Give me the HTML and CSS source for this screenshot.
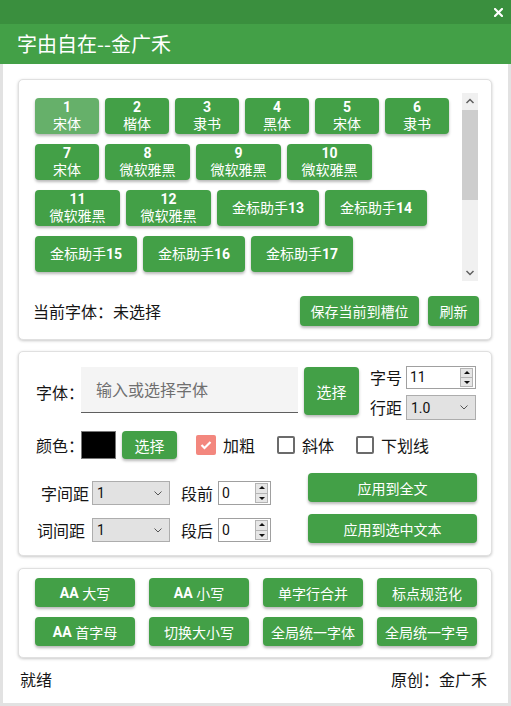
FILE: index.html
```html
<!DOCTYPE html>
<html lang="zh-CN">
<head>
<meta charset="utf-8">
<title>字由自在--金广禾</title>
<link rel="stylesheet" href="styles.css">
</head>
<body>
<div class="app">
  <div class="topbar">
    <svg class="close" width="9" height="9" viewBox="0 0 9 9"><path d="M1 1L8 8M8 1L1 8" stroke="#fff" stroke-width="2.2" stroke-linecap="square" fill="none"/></svg>
  </div>
  <div class="titlebar">字由自在--金广禾</div>
  <div class="main">
    <section class="card card-slots">
      <div class="slots">
        <div class="slot-list">
          <div class="slot-row">
            <button class="btn slot w64 active"><b>1</b><span>宋体</span></button>
            <button class="btn slot w64"><b>2</b><span>楷体</span></button>
            <button class="btn slot w64"><b>3</b><span>隶书</span></button>
            <button class="btn slot w64"><b>4</b><span>黑体</span></button>
            <button class="btn slot w64"><b>5</b><span>宋体</span></button>
            <button class="btn slot w64"><b>6</b><span>隶书</span></button>
          </div>
          <div class="slot-row">
            <button class="btn slot w64"><b>7</b><span>宋体</span></button>
            <button class="btn slot w85"><b>8</b><span>微软雅黑</span></button>
            <button class="btn slot w85"><b>9</b><span>微软雅黑</span></button>
            <button class="btn slot w85"><b>10</b><span>微软雅黑</span></button>
          </div>
          <div class="slot-row">
            <button class="btn slot w85"><b>11</b><span>微软雅黑</span></button>
            <button class="btn slot w85"><b>12</b><span>微软雅黑</span></button>
            <button class="btn slot w102">金标助手<b>13</b></button>
            <button class="btn slot w102">金标助手<b>14</b></button>
          </div>
          <div class="slot-row">
            <button class="btn slot w102">金标助手<b>15</b></button>
            <button class="btn slot w102">金标助手<b>16</b></button>
            <button class="btn slot w102">金标助手<b>17</b></button>
          </div>
        </div>
        <div class="scrollbar">
          <div class="sb-arrow"><svg width="16" height="17" viewBox="0 0 16 17"><polyline points="4.5,10 8,6.5 11.5,10" fill="none" stroke="#606060" stroke-width="1.5"/></svg></div>
          <div class="sb-track"><div class="sb-thumb"></div></div>
          <div class="sb-arrow"><svg width="16" height="17" viewBox="0 0 16 17"><polyline points="4.5,7 8,10.5 11.5,7" fill="none" stroke="#606060" stroke-width="1.5"/></svg></div>
        </div>
      </div>
      <div class="cur-row">
        <span class="cur-label">当前字体：未选择</span>
        <div class="cur-actions">
          <button class="btn btn-sm save">保存当前到槽位</button>
          <button class="btn btn-sm refresh">刷新</button>
        </div>
      </div>
    </section>

    <section class="card card-format">
      <div class="row1">
        <span class="lbl lbl-font">字体：</span>
        <div class="font-input">输入或选择字体</div>
        <button class="btn pick-font">选择</button>
        <div class="size-col">
          <div class="size-row">
            <span class="lbl lbl-size">字号</span>
            <div class="spin spin-size">
              <span class="spin-val">11</span>
              <span class="spin-btns"><span class="sp-up"></span><span class="sp-down"></span></span>
            </div>
          </div>
          <div class="size-row">
            <span class="lbl lbl-size">行距</span>
            <div class="combo combo-line">
              <span>1.0</span>
              <svg width="8" height="5" viewBox="0 0 8 5"><polyline points="0.5,0.5 4,4 7.5,0.5" fill="none" stroke="#555" stroke-width="1"/></svg>
            </div>
          </div>
        </div>
      </div>

      <div class="row2">
        <span class="lbl lbl-color">颜色：</span>
        <span class="swatch"></span>
        <button class="btn pick-color">选择</button>
        <label class="check first">
          <span class="box checked"><svg width="20" height="20" viewBox="0 0 20 20"><polyline points="5.5,10 8.5,13 14.5,7" fill="none" stroke="#fff" stroke-width="2.2"/></svg></span>
          <span class="lbl">加粗</span>
        </label>
        <label class="check">
          <span class="box"></span>
          <span class="lbl">斜体</span>
        </label>
        <label class="check">
          <span class="box"></span>
          <span class="lbl">下划线</span>
        </label>
      </div>

      <div class="row34">
        <div class="spacing">
          <div class="sp-row">
            <span class="lbl sp-label"><span class="in5">字间距</span></span>
            <div class="combo combo-sp">
              <span>1</span>
              <svg width="8" height="5" viewBox="0 0 8 5"><polyline points="0.5,0.5 4,4 7.5,0.5" fill="none" stroke="#555" stroke-width="1"/></svg>
            </div>
            <span class="lbl sp-label2">段前</span>
            <div class="spin spin-para">
              <span class="spin-val">0</span>
              <span class="spin-btns"><span class="sp-up"></span><span class="sp-down"></span></span>
            </div>
          </div>
          <div class="sp-row">
            <span class="lbl sp-label"><span class="in1">词间距</span></span>
            <div class="combo combo-sp">
              <span>1</span>
              <svg width="8" height="5" viewBox="0 0 8 5"><polyline points="0.5,0.5 4,4 7.5,0.5" fill="none" stroke="#555" stroke-width="1"/></svg>
            </div>
            <span class="lbl sp-label2">段后</span>
            <div class="spin spin-para">
              <span class="spin-val">0</span>
              <span class="spin-btns"><span class="sp-up"></span><span class="sp-down"></span></span>
            </div>
          </div>
        </div>
        <div class="apply">
          <button class="btn apply-btn">应用到全文</button>
          <button class="btn apply-btn">应用到选中文本</button>
        </div>
      </div>
    </section>

    <section class="card card-tools">
      <button class="btn tool"><b>AA</b>&nbsp;大写</button>
      <button class="btn tool"><b>AA</b>&nbsp;小写</button>
      <button class="btn tool">单字行合并</button>
      <button class="btn tool">标点规范化</button>
      <button class="btn tool"><b>AA</b>&nbsp;首字母</button>
      <button class="btn tool">切换大小写</button>
      <button class="btn tool">全局统一字体</button>
      <button class="btn tool">全局统一字号</button>
    </section>

    <footer class="status">
      <span>就绪</span>
      <span>原创：金广禾</span>
    </footer>
  </div>
</div>
</body>
</html>
```

FILE: styles.css
```css
* { box-sizing: border-box; }
html, body { margin: 0; padding: 0; }
body {
  width: 511px;
  height: 706px;
  overflow: hidden;
  background: #fff;
  color: #151515;
  font-family: Roboto, "Noto Sans CJK SC", sans-serif;
}
.app {
  width: 511px;
  height: 706px;
  display: flex;
  flex-direction: column;
}
.topbar {
  height: 24px;
  background: #3a8f3e;
  display: flex;
  align-items: center;
  justify-content: flex-end;
  padding-right: 8px;
}
.close { display: block; }
.titlebar {
  height: 40px;
  background: #43a047;
  color: #fff;
  font-family: "Noto Sans CJK SC", sans-serif;
  font-size: 20px;
  line-height: 40px;
  padding-left: 17px;
}
.main {
  flex: 1;
  display: flex;
  flex-direction: column;
  border: 3px solid #e2e2e2;
  border-top: 0;
  padding: 15px 16px 0 15px;
}
.card {
  background: #fff;
  border: 1px solid #e0e0e0;
  border-radius: 5px;
  box-shadow: 0 1px 3px rgba(0, 0, 0, 0.22);
}
.btn {
  border: 0;
  padding: 0;
  margin: 0;
  background: #43a047;
  color: #fff;
  font-family: Roboto, "Noto Sans CJK SC", sans-serif;
  font-size: 14px;
  border-radius: 4px;
  box-shadow: 0 2px 3px rgba(0, 0, 0, 0.28);
  display: flex;
  align-items: center;
  justify-content: center;
  white-space: nowrap;
}
.btn b { font-weight: 700; }
.lbl {
  font-family: "Noto Sans CJK SC", sans-serif;
  font-size: 16px;
  color: #151515;
  white-space: nowrap;
  flex-shrink: 0;
}

/* slots card */
.card-slots { padding: 13px; }
.slots { display: flex; height: 188px; }
.slot-list {
  flex: 1;
  padding: 5px 0 0 3px;
  display: flex;
  flex-direction: column;
  gap: 10px;
  overflow: hidden;
}
.slot-row { display: flex; gap: 6px; }
.slot {
  height: 36px;
  line-height: 17px;
}
.slot b + span { display: block; }
.slot:has(span) { flex-direction: column; }
.w64 { width: 64px; }
.w85 { width: 85px; }
.w102 { width: 102px; }
.active { background: #66b06a; }
.scrollbar {
  width: 16px;
  background: #f0f0f0;
  display: flex;
  flex-direction: column;
}
.sb-arrow { height: 17px; }
.sb-arrow svg { display: block; }
.sb-track { flex: 1; }
.sb-thumb { height: 90px; background: #cdcdcd; }
.cur-row {
  margin-top: 15px;
  height: 30px;
  margin-right: -1px;
  padding-left: 1px;
  display: flex;
  align-items: center;
  justify-content: space-between;
}
.cur-label {
  font-family: "Noto Sans CJK SC", sans-serif;
  font-size: 16px;
}
.cur-actions { display: flex; gap: 9px; }
.btn-sm { height: 30px; }
.save { width: 119px; }
.refresh { width: 51px; }

/* format card */
.card-format {
  margin-top: 11px;
  padding: 14px 14px 12px 17px;
}
.row1 { display: flex; align-items: flex-start; }
.lbl-font {
  width: 45px;
  margin-top: 14px;
  line-height: 24px;
}
.font-input {
  width: 217px;
  height: 46px;
  flex-shrink: 0;
  margin-top: 1px;
  background: #f4f4f4;
  border-bottom: 1px solid #5f5f5f;
  color: #6f6f6f;
  font-family: "Noto Sans CJK SC", sans-serif;
  font-size: 16px;
  line-height: 45px;
  padding-left: 15px;
}
.pick-font {
  width: 55px;
  height: 48px;
  flex-shrink: 0;
  margin: 1px 0 0 6px;
  font-size: 15px;
}
.size-col {
  margin-left: 11px;
  display: flex;
  flex-direction: column;
  gap: 6px;
}
.size-row { display: flex; align-items: center; }
.lbl-size { width: 36px; line-height: 23px; }
.spin {
  display: flex;
  flex-shrink: 0;
  background: #fff;
  border: 1px solid #a0a0a0;
}
.spin-size { width: 70px; height: 23px; }
.spin-val {
  flex: 1;
  font-family: Roboto, "Liberation Sans", sans-serif;
  font-size: 14px;
  line-height: 21px;
  padding-left: 3px;
  color: #111;
}
.spin-btns {
  width: 13px;
  margin: 1px 2px 1px 0;
  display: flex;
  flex-direction: column;
}
.sp-up, .sp-down {
  flex: 1;
  background: #e6e6e6;
  border: 1px solid #b4b4b4;
  position: relative;
}
.sp-down { border-top: 0; }
.sp-up::after, .sp-down::after {
  content: "";
  position: absolute;
  left: 50%;
  top: 50%;
  margin-left: -3px;
  border-left: 3px solid transparent;
  border-right: 3px solid transparent;
}
.sp-up::after { border-bottom: 3px solid #111; margin-top: -2px; }
.sp-down::after { border-top: 3px solid #111; margin-top: -1px; }
.combo {
  display: flex;
  flex-shrink: 0;
  align-items: center;
  justify-content: space-between;
  background: #e2e2e2;
  border: 1px solid #adadad;
  font-family: Roboto, "Liberation Sans", sans-serif;
  font-size: 14px;
  color: #111;
}
.combo svg { display: block; }
.combo-line { width: 70px; height: 25px; padding: 0 7px 0 4px; }

.row2 {
  margin-top: 11px;
  height: 28px;
  display: flex;
  align-items: center;
}
.lbl-color { width: 45px; }
.swatch {
  width: 35px;
  height: 28px;
  flex-shrink: 0;
  background: #000;
  border: 1px solid #777;
}
.pick-color {
  width: 55px;
  height: 28px;
  flex-shrink: 0;
  margin-left: 6px;
  font-size: 15px;
}
.check {
  display: flex;
  align-items: center;
  gap: 6px;
  margin-left: 21px;
}
.check.first { margin-left: 19px; gap: 7px; }
.box {
  width: 18px;
  height: 18px;
  flex-shrink: 0;
  margin: 1px;
  border: 2px solid #6b6b6b;
  border-radius: 2px;
  background: #fff;
}
.box.checked {
  width: 20px;
  height: 20px;
  margin: 0;
  border: 0;
  background: #f3877e;
}
.box svg { display: block; }

.row34 {
  margin-top: 14px;
  display: flex;
  justify-content: space-between;
}
.spacing {
  margin-top: 8px;
  display: flex;
  flex-direction: column;
  gap: 13px;
}
.sp-row { display: flex; align-items: center; height: 24px; }
.sp-label { width: 56px; line-height: 24px; }
.in5 { padding-left: 5px; }
.in1 { padding-left: 1px; }
.combo-sp { width: 78px; height: 24px; padding: 0 7px 0 4px; }
.sp-label2 { width: 37px; margin-left: 11px; line-height: 24px; }
.spin-para { width: 53px; height: 24px; }
.spin-para .spin-val { line-height: 22px; }
.apply {
  display: flex;
  flex-direction: column;
  gap: 12px;
}
.apply-btn { width: 169px; height: 29px; }

/* tools card */
.card-tools {
  margin-top: 12px;
  padding: 9px 14px 11px 16px;
  display: grid;
  grid-template-columns: repeat(4, 100px);
  grid-auto-rows: 29px;
  gap: 10px 14px;
}

.status {
  flex: 1;
  display: flex;
  align-items: center;
  justify-content: space-between;
  padding: 0 5px 4px 2px;
  font-family: "Noto Sans CJK SC", sans-serif;
  font-size: 16px;
  color: #151515;
}
```
